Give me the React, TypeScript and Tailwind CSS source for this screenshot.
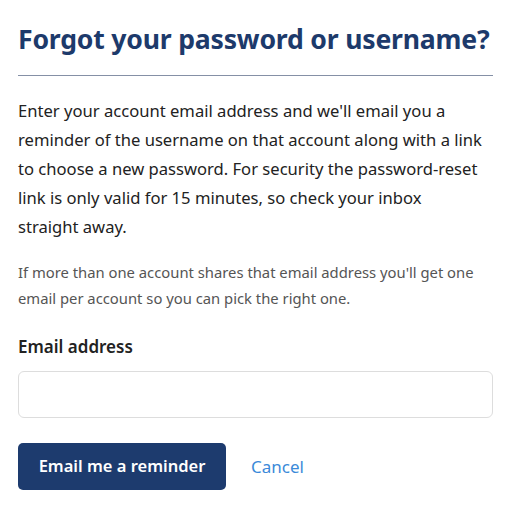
import React from "react";

export default function App() {
  return (
    <div className="min-h-[522px] bg-white px-[18px] pt-[22px] text-[#222]" style={{ fontFamily: '"Noto Sans", "Open Sans", sans-serif' }}>
      <h1 className="text-[26.6px] font-bold leading-[34px] text-[#1d3a6b] tracking-[-0.2px]">
        Forgot your password or username?
      </h1>
      <hr className="mt-[19px] border-0 border-t border-[#8590a6] w-[475px]" />
      <p className="mt-[20px] text-[16.6px] leading-[29px] text-[#222] w-[475px]">
        Enter your account email address and we'll email you a reminder of the username on that account along with a link to choose a new password. For security the password-reset link is only valid for 15 minutes, so check your inbox
        <br />
        straight away.
      </p>
      <p className="mt-[18px] text-[14.8px] leading-[26px] text-[#555] w-[475px]">
        If more than one account shares that email address you'll get one email per account so you can pick the right one.
      </p>
      <label className="block mt-[23px] text-[17px] font-semibold leading-[26px] text-[#222]">
        Email address
      </label>
      <input
        type="email"
        className="mt-[11px] block w-[475px] h-[47px] rounded-[6px] border border-[#ddd] bg-white px-3 outline-none"
      />
      <div className="mt-[25px] flex items-center gap-[25px]">
        <button className="h-[47px] w-[208px] rounded-[5px] bg-[#1d3b6e] text-[16.5px] font-semibold text-white">
          Email me a reminder
        </button>
        <a href="#" className="text-[17px] text-[#3b8ad9]">
          Cancel
        </a>
      </div>
    </div>
  );
}
